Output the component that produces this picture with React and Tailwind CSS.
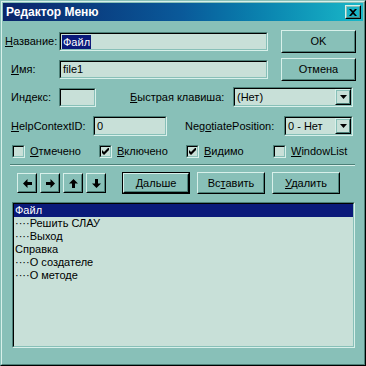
import React from "react";

function Raised({ className = "", children, def = false }) {
  const inner = (
    <div className="w-full h-full border border-t-[#d8f0ea] border-l-[#d8f0ea] border-r-black border-b-black">
      <div className="w-full h-full border border-t-[#88c0b8] border-l-[#88c0b8] border-r-[#4c8078] border-b-[#4c8078] flex items-center justify-center">
        {children}
      </div>
    </div>
  );
  if (def) {
    return <div className={"shrink-0 border border-black " + className}>{inner}</div>;
  }
  return <div className={"shrink-0 " + className}>{inner}</div>;
}

function Sunken({ className = "", children, inner = "" }) {
  return (
    <div className={"shrink-0 border border-t-[#4c8078] border-l-[#4c8078] border-r-[#d8f0ea] border-b-[#d8f0ea] " + className}>
      <div className={"w-full h-full border border-t-black border-l-black border-r-[#88c0b8] border-b-[#88c0b8] bg-[#c8e0d8] " + inner}>
        {children}
      </div>
    </div>
  );
}

function DownArrow() {
  return (
    <svg width="7" height="4" viewBox="0 0 7 4">
      <path d="M0 0 H7 L3.5 4 Z" fill="black" />
    </svg>
  );
}

function Combo({ className, text }) {
  return (
    <Sunken className={className} inner="flex items-stretch">
      <div className="flex-1 flex items-center pl-[2px] leading-none">{text}</div>
      <Raised className="w-[16px]">
        <DownArrow />
      </Raised>
    </Sunken>
  );
}

function Check({ checked }) {
  return (
    <Sunken className="w-[13px] h-[13px]" inner="flex items-center justify-center">
      {checked && (
        <svg width="7" height="7" viewBox="0 0 7 7">
          <path d="M0 2 L2 4 L7 -1 L7 2 L2 7 L0 5 Z" fill="black" />
        </svg>
      )}
    </Sunken>
  );
}

function Arrow({ dir }) {
  const paths = {
    left: "M0 4.5 L4.5 0 L4.5 3 L9 3 L9 6 L4.5 6 L4.5 9 Z",
    right: "M9 4.5 L4.5 0 L4.5 3 L0 3 L0 6 L4.5 6 L4.5 9 Z",
    up: "M4.5 0 L0 4.5 L3 4.5 L3 9 L6 9 L6 4.5 L9 4.5 Z",
    down: "M4.5 9 L0 4.5 L3 4.5 L3 0 L6 0 L6 4.5 L9 4.5 Z",
  };
  return (
    <svg width="9" height="9" viewBox="0 0 9 9">
      <path d={paths[dir]} fill="black" />
    </svg>
  );
}

export default function App() {
  return (
    <div className="w-[366px] h-[366px] bg-[#88c0b8] font-['Liberation_Sans',Arial,sans-serif] text-[11px] text-black border border-t-[#88c0b8] border-l-[#88c0b8] border-r-black border-b-black select-none">
      <div className="w-full h-full border border-t-[#d8f0ea] border-l-[#d8f0ea] border-r-[#4c8078] border-b-[#4c8078] flex flex-col">
        {/* Title bar */}
        <div className="mx-[1px] mt-[1px] h-[18px] shrink-0 bg-linear-to-r from-[#0a246a] via-[#0a5a9a] to-[#1ab8c8] flex items-center pl-[3px] pr-[2px]">
          <span className="text-white font-bold text-[12px] leading-none">Редактор Меню</span>
          <div className="flex-1" />
          <Raised className="w-[16px] h-[14px]">
            <svg width="8" height="7" viewBox="0 0 8 7">
              <path d="M0 0 H2 L4 2 L6 0 H8 L5 3.5 L8 7 H6 L4 5 L2 7 H0 L3 3.5 Z" fill="black" />
            </svg>
          </Raised>
        </div>

        {/* Row 1 */}
        <div className="flex h-[23px] mt-[9px] shrink-0">
          <span className="ml-[3px] w-[54px] shrink-0 self-center leading-none">
            <u>Н</u>азвание:
          </span>
          <Sunken className="w-[209px] h-[19px] mt-[2px]" inner="flex items-center pl-[1px]">
            <span className="bg-[#0a1a7a] text-white leading-[14px] px-[1px]">Файл</span>
          </Sunken>
          <Raised className="ml-[13px] w-[75px] h-[23px]">
            <span>OK</span>
          </Raised>
        </div>

        {/* Row 2 */}
        <div className="flex h-[23px] mt-[5px] shrink-0">
          <span className="ml-[9px] w-[48px] shrink-0 self-center leading-none">
            <u>И</u>мя:
          </span>
          <Sunken className="w-[209px] h-[19px] mt-[2px]" inner="flex items-center pl-[2px]">
            <span className="leading-none">file1</span>
          </Sunken>
          <Raised className="ml-[13px] w-[75px] h-[23px]">
            <span>Отмена</span>
          </Raised>
        </div>

        {/* Row 3 */}
        <div className="flex items-center h-[20px] mt-[6px] shrink-0">
          <span className="ml-[9px] w-[48px] shrink-0 leading-none">
            Ин<u>д</u>екс:
          </span>
          <Sunken className="w-[37px] h-[19px]" />
          <span className="ml-[34px] w-[103px] shrink-0 leading-none">
            <u>Б</u>ыстрая клавиша:
          </span>
          <Combo className="w-[120px] h-[20px]" text="(Нет)" />
        </div>

        {/* Row 4 */}
        <div className="flex items-center h-[20px] mt-[9px] shrink-0">
          <span className="ml-[9px] w-[82px] shrink-0 leading-none">
            <u>H</u>elpContextID:
          </span>
          <Sunken className="w-[74px] h-[20px]" inner="flex items-center pl-[2px]">
            <span className="leading-none">0</span>
          </Sunken>
          <span className="ml-[18px] w-[99px] shrink-0 leading-none">
            Neg<u>o</u>tiatePosition:
          </span>
          <Combo className="w-[69px] h-[20px]" text="0 - Нет" />
        </div>

        {/* Checkboxes */}
        <div className="flex items-center h-[13px] mt-[9px] ml-[10px] shrink-0">
          <div className="w-[87px] flex items-center gap-[5px] shrink-0">
            <Check />
            <span className="leading-none"><u>О</u>тмечено</span>
          </div>
          <div className="w-[87px] flex items-center gap-[5px] shrink-0">
            <Check checked />
            <span className="leading-none"><u>В</u>ключено</span>
          </div>
          <div className="w-[87px] flex items-center gap-[5px] shrink-0">
            <Check checked />
            <span className="leading-none"><u>В</u>идимо</span>
          </div>
          <div className="w-[87px] flex items-center gap-[5px] shrink-0">
            <Check />
            <span className="leading-none"><u>W</u>indowList</span>
          </div>
        </div>

        {/* Separator */}
        <div className="ml-[8px] w-[345px] mt-[6px] shrink-0 border-t border-t-[#4c8078] border-b border-b-[#d8f0ea]" />

        {/* Buttons row */}
        <div className="flex h-[22px] mt-[6px] shrink-0">
          <div className="flex gap-[3px] ml-[15px] mt-[1px]">
            <Raised className="w-[20px] h-[20px]"><Arrow dir="left" /></Raised>
            <Raised className="w-[20px] h-[20px]"><Arrow dir="right" /></Raised>
            <Raised className="w-[20px] h-[20px]"><Arrow dir="up" /></Raised>
            <Raised className="w-[20px] h-[20px]"><Arrow dir="down" /></Raised>
          </div>
          <Raised def className="ml-[16px] w-[68px] h-[22px]">
            <span><u>Д</u>альше</span>
          </Raised>
          <Raised className="ml-[7px] w-[68px] h-[22px]">
            <span>Вс<u>т</u>авить</span>
          </Raised>
          <Raised className="ml-[7px] w-[68px] h-[22px]">
            <span><u>У</u>далить</span>
          </Raised>
        </div>

        {/* List box */}
        <Sunken className="ml-[10px] mt-[8px] w-[343px] h-[146px]" inner="flex flex-col">
          <div className="h-[13px] leading-[13px] pl-[1px] bg-[#0a1a7a] text-white">Файл</div>
          <div className="h-[13px] leading-[13px] pl-[1px]">····Решить СЛАУ</div>
          <div className="h-[13px] leading-[13px] pl-[1px]">····Выход</div>
          <div className="h-[13px] leading-[13px] pl-[1px]">Справка</div>
          <div className="h-[13px] leading-[13px] pl-[1px]">····О создателе</div>
          <div className="h-[13px] leading-[13px] pl-[1px]">····О методе</div>
        </Sunken>
      </div>
    </div>
  );
}
